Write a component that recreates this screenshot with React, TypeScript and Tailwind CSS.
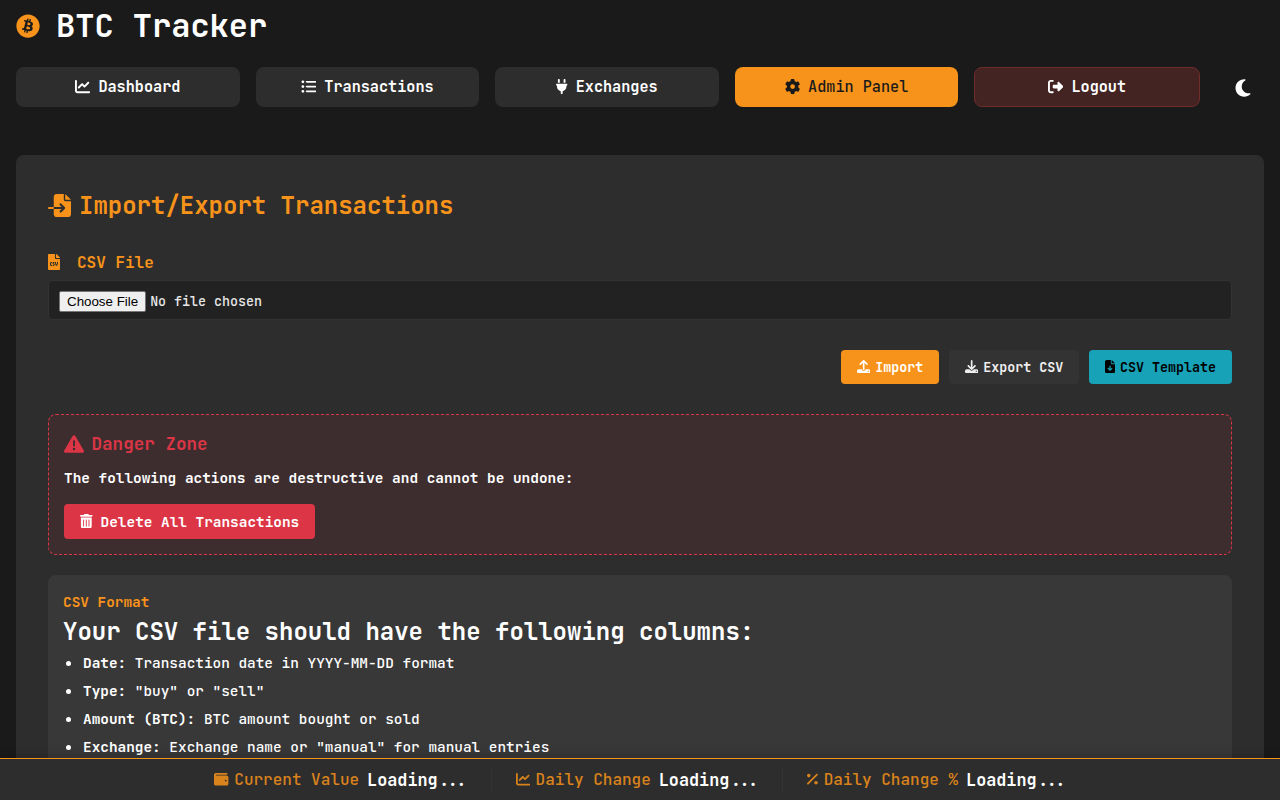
import type { ReactNode } from "react";
import {
  FaBitcoin, FaChartLine, FaListUl, FaPlug, FaGear, FaRightFromBracket, FaMoon,
  FaFileImport, FaUpload, FaDownload, FaFileArrowDown,
  FaTriangleExclamation, FaTrashCan, FaWallet, FaPercent,
} from "react-icons/fa6";
import { FaFileCsv } from "react-icons/fa";

const icon = "size-[1em] shrink-0";
const narrowIcon = "h-[1em] w-[0.75em] shrink-0";
const navItem =
  "flex h-10 flex-1 items-center justify-center gap-2 rounded-lg px-4 text-[15.2px] whitespace-nowrap";
const action = "flex items-center gap-[4.8px] rounded px-4";

function NavItem({ children }: { children: ReactNode }) {
  return <a className={`${navItem} bg-[#2d2d2d] font-semibold text-white`}>{children}</a>;
}

const columns = [
  { name: "Date:", text: "Transaction date in YYYY-MM-DD format" },
  { name: "Type:", text: '"buy" or "sell"' },
  { name: "Amount (BTC):", text: "BTC amount bought or sold" },
  { name: "Exchange:", text: 'Exchange name or "manual" for manual entries' },
];

function Stat({ glyph, label }: { glyph: ReactNode; label: string }) {
  return (
    <div className="flex items-center">
      <span className="flex items-center gap-[5.7px] font-medium text-[#f7931a] opacity-85">
        <span className="flex pb-px text-[14.4px]">{glyph}</span>
        {label}
      </span>
      <span className="ml-2 text-[16.8px] leading-6 font-bold text-white">Loading...</span>
    </div>
  );
}

export default function App() {
  return (
    <div className="flex h-[800px] flex-col overflow-hidden bg-[#1a1a1a] font-['JetBrains_Mono','DejaVu_Sans_Mono',monospace] text-white">
      <header className="shrink-0 px-4">
        <div className="flex h-[52px] items-center gap-4">
          <FaBitcoin className="size-6 text-[#f7931a]" />
          <h1 className="text-[32px] leading-[52px] font-semibold">BTC Tracker</h1>
        </div>
        <nav className="mt-[15px] flex items-center gap-4">
          <NavItem><FaChartLine className={icon} />Dashboard</NavItem>
          <NavItem><FaListUl className={icon} />Transactions</NavItem>
          <NavItem><FaPlug className={narrowIcon} />Exchanges</NavItem>
          <a className={`${navItem} bg-[#f7931a] font-medium text-[#1a1a1a]`}><FaGear className={icon} />Admin Panel</a>
          <a className={`${navItem} border border-[#6f2c2b] bg-[#432422] font-bold text-white`}><FaRightFromBracket className={icon} />Logout</a>
          <button className="flex h-10 w-12 items-center justify-center pt-[2px] pl-[6px] text-xl"><FaMoon className={icon} /></button>
        </nav>
      </header>

      <main className="mx-4 mt-12 min-h-0 flex-1 overflow-hidden rounded-t-lg bg-[#2d2d2d] px-8 pt-8">
        <h2 className="flex h-[38px] items-center gap-2 text-2xl font-semibold text-[#f7931a]">
          <FaFileImport className="mb-[2px] size-[23px]" />Import/Export Transactions
        </h2>
        <label className="mt-[26px] flex h-[24px] items-center gap-[17px] text-base font-semibold text-[#f7931a]">
          <FaFileCsv className="mb-[2px] h-4 w-3" />CSV File
        </label>
        <input
          type="file"
          className="mt-[5px] block h-10 w-full rounded border border-[#333] bg-[#222] px-[10px] pt-[10px] text-[13.333px] leading-[20px] font-medium text-[#e8e8e8] file:mr-1 file:h-[21px] file:rounded-[2px] file:border file:border-solid file:border-[#767676] file:bg-[#efefef] file:px-[7px] file:py-px file:font-['Liberation_Sans'] file:leading-[15px] file:font-normal file:text-black"
        />
        <div className="mt-[30px] flex h-[34px] justify-end gap-[10px] text-[13.333px] font-bold">
          <button className={`${action} bg-[#f7931a]`}><FaUpload className={`${icon} mb-px`} /><span className="pt-px">Import</span></button>
          <button className={`${action} bg-[#333] text-[#eee]`}><FaDownload className={`${icon} mb-px`} /><span className="pt-px">Export CSV</span></button>
          <button className={`${action} bg-[#17a2b8] font-semibold text-black`}><FaFileArrowDown className={`${narrowIcon} mb-px`} /><span className="pt-px">CSV Template</span></button>
        </div>

        <section className="mt-[30px] h-[141px] rounded-lg border border-dashed border-[#dc3545] bg-[#dc3545]/10 px-[15px] pt-[15px]">
          <h3 className="flex h-7 items-center gap-[7.5px] text-[17.6px] font-semibold text-[#dc3545]"><FaTriangleExclamation className="size-5" />Danger Zone</h3>
          <p className="mt-[9px] text-[14.4px] leading-[22px] font-bold">The following actions are destructive and cannot be undone:</p>
          <button className="mt-[15px] flex h-[35px] items-center gap-2 rounded bg-[#dc3545] px-4 text-[14.4px] font-bold"><FaTrashCan className="mb-px h-[1em] w-[0.875em] shrink-0" />Delete All Transactions</button>
        </section>

        <section className="mt-5 h-[400px] rounded-lg bg-[#383838] px-[15px] pt-4">
          <h4 className="text-[14.4px] leading-[22px] font-semibold text-[#f7931a]">CSV Format</h4>
          <p className="text-2xl leading-[38px] font-semibold">Your CSV file should have the following columns:</p>
          <ul className="-mt-[2px] text-[14.4px] font-medium">
            {columns.map((c) => (
              <li key={c.name} className="flex h-7 items-center">
                <span className="mr-3 ml-[3px] size-[5px] rounded-full bg-white" />
                <span><b className="font-bold">{c.name}</b> {c.text}</span>
              </li>
            ))}
          </ul>
        </section>
      </main>

      <footer className="relative flex h-[42px] shrink-0 items-center justify-center border-t border-[#f7931a] bg-[#2d2d2d] pl-px text-base shadow-[0_-2px_10px_rgba(0,0,0,0.2)]">
        <Stat glyph={<FaWallet className={icon} />} label="Current Value" />
        <i className="mr-6 ml-[22.7px] h-[25px] w-px bg-[#333]" />
        <Stat glyph={<FaChartLine className={icon} />} label="Daily Change" />
        <i className="mr-6 ml-[22.7px] h-[25px] w-px bg-[#333]" />
        <Stat glyph={<FaPercent className={narrowIcon} />} label="Daily Change %" />
      </footer>
    </div>
  );
}
